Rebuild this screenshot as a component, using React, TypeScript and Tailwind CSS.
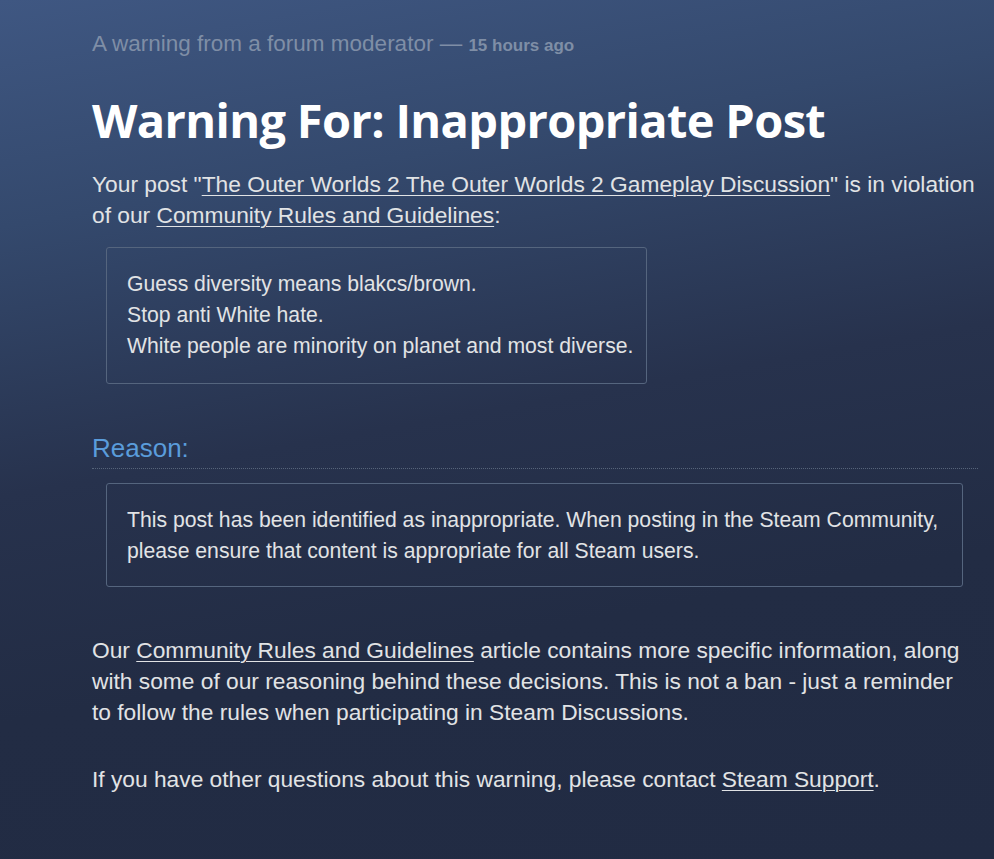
import React from "react";

export default function App() {
  const link = "underline underline-offset-[3px] decoration-1";
  return (
    <div
      className="w-[994px] h-[859px] overflow-hidden bg-[linear-gradient(170deg,#3f5782_0%,#34496d_22%,#27324d_48%,#222c44_70%,#212b43_100%)] text-[#e1e3e5]"
      style={{ fontFamily: '"Liberation Sans", Arial, sans-serif' }}
    >
      <div className="pl-[92px] pr-[8px] pt-[31px]">
        <div className="text-[22.5px] text-[#7f8ea6] leading-[26px] whitespace-nowrap">
          A warning from a forum moderator — <span className="text-[17px] font-bold">15 hours ago</span>
        </div>
        <h1
          className="mt-[33px] text-[47px] font-bold text-white leading-[56px] tracking-[-0.65px] whitespace-nowrap"
          style={{ fontFamily: '"Open Sans", "Liberation Sans", sans-serif' }}
        >
          Warning For: Inappropriate Post
        </h1>
        <p className="mt-[21px] text-[22.75px] leading-[31px] whitespace-nowrap">
          Your post "<span className={link}>The Outer Worlds 2 The Outer Worlds 2 Gameplay Discussion</span>" is in violation
          <br />
          of our <span className={link}>Community Rules and Guidelines</span>:
        </p>
        <div className="mt-[16px] ml-[14px] w-[541px] border border-[#55657e] rounded-[3px] px-[20px] pt-[20px] pb-[22px] text-[21.2px] leading-[31px] whitespace-nowrap">
          <div>Guess diversity means blakcs/brown.</div>
          <div>Stop anti White hate.</div>
          <div>White people are minority on planet and most diverse.</div>
        </div>
        <div className="mt-[49px] w-[886px] border-b border-dotted border-[#56647a] pb-[5px]">
          <div className="text-[26px] leading-[30px] text-[#5a9cdb]">Reason:</div>
        </div>
        <div className="mt-[14px] ml-[14px] w-[857px] border border-[#55657e] rounded-[3px] px-[20px] pt-[20px] pb-[20px] text-[21.2px] leading-[31px] whitespace-nowrap">
          This post has been identified as inappropriate. When posting in the Steam Community,
          <br />
          please ensure that content is appropriate for all Steam users.
        </div>
        <p className="mt-[48px] text-[22.75px] leading-[31px] whitespace-nowrap">
          Our <span className={link}>Community Rules and Guidelines</span> article contains more specific information, along
          <br />
          with some of our reasoning behind these decisions. This is not a ban - just a reminder
          <br />
          to follow the rules when participating in Steam Discussions.
        </p>
        <p className="mt-[36px] text-[22.75px] leading-[31px] whitespace-nowrap">
          If you have other questions about this warning, please contact <span className={link}>Steam Support</span>.
        </p>
      </div>
    </div>
  );
}
